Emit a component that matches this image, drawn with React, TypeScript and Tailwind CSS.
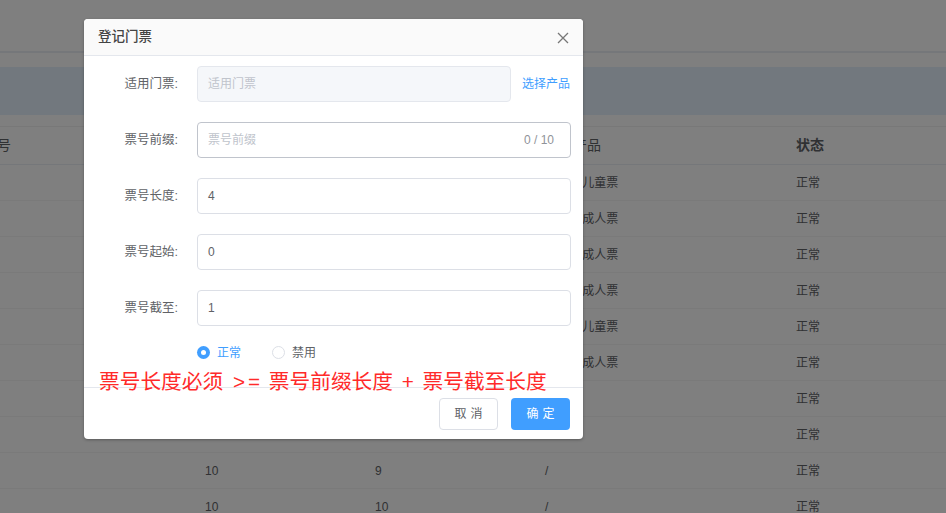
import React from "react";

const font = { fontFamily: '"Liberation Sans", "Noto Sans CJK SC", sans-serif' };

type Row = { b: string; c: string; d: string };
const rows: Row[] = [
  { b: "4", c: "1", d: "门票/儿童票" },
  { b: "4", c: "2", d: "门票/成人票" },
  { b: "4", c: "3", d: "门票/成人票" },
  { b: "4", c: "4", d: "门票/成人票" },
  { b: "4", c: "5", d: "门票/儿童票" },
  { b: "4", c: "6", d: "门票/成人票" },
  { b: "10", c: "7", d: "/" },
  { b: "10", c: "8", d: "/" },
  { b: "10", c: "9", d: "/" },
  { b: "10", c: "10", d: "/" },
];

function Field({ label, children }: { label: string; children: React.ReactNode }) {
  return (
    <div className="flex items-center h-[36px] mb-[20px]">
      <div className="w-[113px] shrink-0 text-right pr-[19px] text-[12.5px] text-[#606266]">{label}</div>
      <div className="flex-1 flex items-center h-full">{children}</div>
    </div>
  );
}

export default function App() {
  return (
    <div className="relative w-[946px] h-[513px] overflow-hidden bg-white" style={font}>
      {/* background page */}
      <div className="h-[51px]" />
      <div className="h-[2px] bg-[#ebeef5]" />
      <div className="h-[14px]" />
      <div className="h-[48px] bg-[#e5f1fd]" />
      <div className="h-[11px]" />
      <div className="border-t border-[#f0f0f0]">
        <div className="grid grid-cols-[205px_170px_170px_251px_1fr] h-[38px] items-center border-b border-[#ebeef5] text-[14px] text-[#606266]">
          <div className="ml-[-3px]">号</div>
          <div>票号长度</div>
          <div>票号截至</div>
          <div>适用产品</div>
          <div className="font-bold text-[#606266]">状态</div>
        </div>
        {rows.map((r, i) => (
          <div
            key={i}
            className="grid grid-cols-[205px_170px_170px_251px_1fr] h-[36px] items-center border-b border-[#f5f5f5] text-[12px] text-[#606266]"
          >
            <div />
            <div>{r.b}</div>
            <div>{r.c}</div>
            <div className={r.d === "/" ? "" : "pl-[10px]"}>{r.d}</div>
            <div>正常</div>
          </div>
        ))}
      </div>

      {/* overlay */}
      <div className="absolute inset-0 bg-black/50" />

      {/* dialog */}
      <div className="absolute left-[84px] top-[19px] w-[499px] h-[420px] bg-white rounded-[4px] shadow-[0_1px_3px_rgba(0,0,0,0.3)] flex flex-col overflow-hidden">
        <div className="h-[37px] shrink-0 bg-[#fafafa] border-b border-[#e4e7ed] flex items-center justify-between pl-[14px] pr-[14px]">
          <span className="text-[13.5px] font-medium text-[#444]">登记门票</span>
          <svg width="12" height="12" viewBox="0 0 12 12" className="mt-[1px]">
            <path d="M1 1 L11 11 M11 1 L1 11" stroke="#777" strokeWidth="1.3" fill="none" />
          </svg>
        </div>
        <div className="flex-1 pt-[10px] pr-[12px]">
          <Field label="适用门票:">
            <div className="w-[314px] h-full rounded-[4px] border border-[#e4e7ed] bg-[#f5f7fa] flex items-center px-[10px] text-[12px] text-[#c0c4cc]">
              适用门票
            </div>
            <span className="ml-[11px] text-[12px] text-[#409eff]">选择产品</span>
          </Field>
          <Field label="票号前缀:">
            <div className="flex-1 h-full rounded-[4px] border border-[#c0c4cc] bg-white flex items-center justify-between px-[10px] text-[12px]">
              <span className="text-[#c0c4cc]">票号前缀</span>
              <span className="text-[#909399] pr-[6px]">0 / 10</span>
            </div>
          </Field>
          {["4", "0", "1"].map((v, i) => (
            <Field key={i} label={["票号长度:", "票号起始:", "票号截至:"][i]}>
              <div className="flex-1 h-full rounded-[4px] border border-[#dcdfe6] bg-white flex items-center px-[10px] text-[12px] text-[#606266]">
                {v}
              </div>
            </Field>
          ))}
          <div className="flex items-center h-[13px] pl-[113px] text-[12px]">
            <span className="w-[13px] h-[13px] rounded-full bg-[#409eff] flex items-center justify-center">
              <span className="w-[5px] h-[5px] rounded-full bg-white" />
            </span>
            <span className="ml-[7px] text-[#409eff]">正常</span>
            <span className="ml-[31px] w-[13px] h-[13px] rounded-full border border-[#dcdfe6] bg-white" />
            <span className="ml-[7px] text-[#606266]">禁用</span>
          </div>
        </div>
        <div className="h-[52px] shrink-0 border-t border-[#e4e7ed] flex items-start justify-end pt-[10px] pr-[13px] gap-[13px]">
          <button className="w-[59px] h-[32px] rounded-[4px] border border-[#dcdfe6] bg-white text-[12px] text-[#606266] tracking-[4px] pl-[4px]">
            取消
          </button>
          <button className="w-[59px] h-[32px] rounded-[4px] bg-[#409eff] text-[12px] text-white tracking-[4px] pl-[4px]">
            确定
          </button>
        </div>
      </div>

      {/* annotation */}
      <div className="absolute left-[99px] top-[370px] text-[20.7px] leading-[24px] text-[#ff2a2a] whitespace-nowrap">
        票号长度必须<span className="ml-[4px]"> &gt;</span>
        <span className="ml-[3px]">=</span>
        <span className="ml-[3px]"> 票号前缀长度</span>
        <span className="ml-[3px]"> + </span>
        <span className="ml-[3px]">票号截至长度</span>
      </div>
    </div>
  );
}
